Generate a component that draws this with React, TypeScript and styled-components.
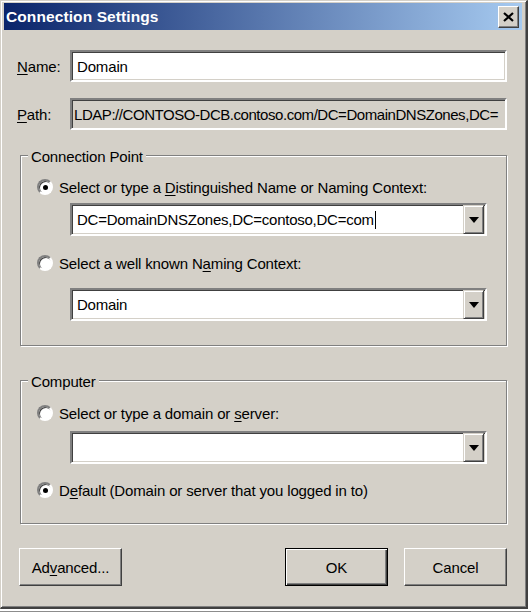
import React from "react";
import styled, { createGlobalStyle } from "styled-components";

const GlobalStyle = createGlobalStyle`
  html, body { margin: 0; padding: 0; background: #ffffff; }
  body { font-family: "Liberation Sans", Arial, sans-serif; }
  u { text-decoration: underline; text-underline-offset: 2px; text-decoration-thickness: 1px; }
`;

const Window = styled.div`
  box-sizing: border-box;
  width: 528px;
  height: 609px;
  background: #d4d0c8;
  border-style: solid;
  border-width: 1px 2px 2px 1px;
  border-color: #d4d0c8 #404040 #404040 #d4d0c8;
  box-shadow: inset 1px 1px 0 #ffffff, inset -1px -1px 0 #808080;
  padding: 2px 4px 0 3px;
  display: flex;
  flex-direction: column;
`;

const BottomEdge = styled.div`
  width: 531px;
  height: 1px;
  margin-top: 2px;
  background: #8c8c8c;
`;

const TitleBar = styled.div`
  height: 27px;
  display: flex;
  align-items: center;
  justify-content: space-between;
  padding: 0 3px 0 2px;
  background: linear-gradient(to right, #0a246a, #a6caf0);
`;

const TitleText = styled.span`
  color: #ffffff;
  font-weight: bold;
  font-size: 15.5px;
  letter-spacing: 0.1px;
`;

const CloseButton = styled.button`
  box-sizing: border-box;
  width: 21px;
  height: 22px;
  padding: 0;
  margin: 0;
  background: #d4d0c8;
  border: 1px solid;
  border-color: #ffffff #404040 #404040 #ffffff;
  box-shadow: inset -1px -1px 0 #808080;
  display: flex;
  align-items: center;
  justify-content: center;
`;

const Body = styled.div`
  display: flex;
  flex-direction: column;
  padding: 20px 15px 0 13px;
  font-size: 15px;
  letter-spacing: -0.15px;
  color: #000000;
`;

const FieldRow = styled.div`
  display: flex;
  align-items: center;
  height: 32px;
  & + & { margin-top: 16px; }
`;

const FieldLabel = styled.span`
  width: 53px;
  flex: none;
`;

const TextBox = styled.div<{ $readOnly?: boolean }>`
  box-sizing: border-box;
  flex: 1;
  min-width: 0;
  height: 32px;
  display: flex;
  align-items: center;
  padding-left: ${(p) => (p.$readOnly ? 2 : 5)}px;
  letter-spacing: ${(p) => (p.$readOnly ? "-0.45px" : "-0.15px")};
  background: ${(p) => (p.$readOnly ? "#d4d0c8" : "#ffffff")};
  border: 2px solid;
  border-color: #808080 #ffffff #ffffff #808080;
  box-shadow: inset 1px 1px 0 #404040, inset -1px -1px 0 #d4d0c8;
  white-space: nowrap;
  overflow: hidden;
`;

const Group = styled.div<{ $top: number; $bottom: number }>`
  display: flex;
  flex-direction: column;
  margin: ${(p) => p.$top}px 0 0 3px;
  border: 1px solid #808080;
  box-shadow: inset 1px 1px 0 #ffffff, 1px 1px 0 #ffffff;
  padding: 0 19px ${(p) => p.$bottom}px 16px;
`;

const Legend = styled.span`
  align-self: flex-start;
  height: 18px;
  line-height: 18px;
  margin: -8px 0 0 -9px;
  padding: 0 3px;
  background: #d4d0c8;
`;

const RadioRow = styled.div<{ $gap: number }>`
  display: flex;
  align-items: center;
  height: 20px;
  gap: 6px;
  margin-top: ${(p) => p.$gap}px;
  white-space: nowrap;
`;

const RadioCircle = styled.span<{ $checked: boolean }>`
  box-sizing: border-box;
  flex: none;
  width: 16px;
  height: 16px;
  border-radius: 50%;
  background: #ffffff;
  border: 2px solid;
  border-color: #808080 #ffffff #ffffff #808080;
  box-shadow: inset 1px 1px 0 #404040;
  display: flex;
  align-items: center;
  justify-content: center;
  &::after {
    content: "";
    width: 5px;
    height: 5px;
    border-radius: 50%;
    background: #000000;
    display: ${(p) => (p.$checked ? "block" : "none")};
  }
`;

const Combo = styled.div<{ $gap: number }>`
  box-sizing: border-box;
  height: 33px;
  margin: ${(p) => p.$gap}px 0 0 33px;
  display: flex;
  align-items: stretch;
  background: #ffffff;
  border: 2px solid;
  border-color: #808080 #ffffff #ffffff #808080;
  box-shadow: inset 1px 1px 0 #404040, inset -1px -1px 0 #d4d0c8;
`;

const ComboText = styled.div`
  flex: 1;
  min-width: 0;
  display: flex;
  align-items: center;
  padding-left: 5px;
  letter-spacing: -0.25px;
  white-space: nowrap;
  overflow: hidden;
`;

const Caret = styled.span`
  width: 1px;
  height: 18px;
  margin-left: 1px;
  background: #000000;
`;

const DropButton = styled.span`
  box-sizing: border-box;
  width: 21px;
  margin-right: 1px;
  background: #d4d0c8;
  border: 1px solid;
  border-color: #d4d0c8 #404040 #404040 #d4d0c8;
  box-shadow: inset 1px 1px 0 #ffffff, inset -1px -1px 0 #808080;
  display: flex;
  align-items: center;
  justify-content: center;
  &::after {
    content: "";
    border-style: solid;
    border-width: 6px 5px 0 5px;
    border-color: #000000 transparent transparent transparent;
  }
`;

const ButtonRow = styled.div`
  display: flex;
  align-items: center;
  margin-top: 24px;
  padding-left: 2px;
  gap: 16px;
`;

const PushButton = styled.button<{ $default?: boolean; $push?: boolean }>`
  box-sizing: border-box;
  width: 103px;
  height: 38px;
  margin: 0 0 0 ${(p) => (p.$push ? "auto" : "0")};
  padding: 0;
  font-family: "Liberation Sans", Arial, sans-serif;
  font-size: 15px;
  letter-spacing: -0.15px;
  color: #000000;
  background: #d4d0c8;
  border: 1px solid;
  border-color: ${(p) => (p.$default ? "#000000" : "#ffffff #404040 #404040 #ffffff")};
  box-shadow: ${(p) =>
    p.$default
      ? "inset 1px 1px 0 #ffffff, inset -1px -1px 0 #404040, inset -2px -2px 0 #808080"
      : "inset -1px -1px 0 #808080"};
`;

function Radio({ checked, gap, children }: { checked: boolean; gap: number; children: React.ReactNode }) {
  return (
    <RadioRow $gap={gap}>
      <RadioCircle $checked={checked} />
      <span>{children}</span>
    </RadioRow>
  );
}

function ComboBox({ gap, children }: { gap: number; children?: React.ReactNode }) {
  return (
    <Combo $gap={gap}>
      <ComboText>{children}</ComboText>
      <DropButton />
    </Combo>
  );
}

export default function App() {
  return (
    <>
      <GlobalStyle />
      <Window>
        <TitleBar>
          <TitleText>Connection Settings</TitleText>
          <CloseButton aria-label="Close">
            <svg width="11" height="10" viewBox="0 0 11 10">
              <path d="M1 1 L10 9 M10 1 L1 9" stroke="#000" strokeWidth="2.2" fill="none" />
            </svg>
          </CloseButton>
        </TitleBar>
        <Body>
          <FieldRow>
            <FieldLabel>
              <u>N</u>ame:
            </FieldLabel>
            <TextBox>Domain</TextBox>
          </FieldRow>
          <FieldRow>
            <FieldLabel>
              <u>P</u>ath:
            </FieldLabel>
            <TextBox $readOnly>LDAP://CONTOSO-DCB.contoso.com/DC=DomainDNSZones,DC=</TextBox>
          </FieldRow>

          <Group $top={25} $bottom={24}>
            <Legend>Connection Point</Legend>
            <Radio checked gap={11}>
              Select or type a <u>D</u>istinguished Name or Naming Context:
            </Radio>
            <ComboBox gap={6}>
              DC=DomainDNSZones,DC=contoso,DC=com
              <Caret />
            </ComboBox>
            <Radio checked={false} gap={17}>
              Select a well known N<u>a</u>ming Context:
            </Radio>
            <ComboBox gap={15}>Domain</ComboBox>
          </Group>

          <Group $top={34} $bottom={23}>
            <Legend>Computer</Legend>
            <Radio checked={false} gap={12}>
              Select or type a domain or <u>s</u>erver:
            </Radio>
            <ComboBox gap={8} />
            <Radio checked gap={16}>
              D<u>e</u>fault (Domain or server that you logged in to)
            </Radio>
          </Group>

          <ButtonRow>
            <PushButton>
              Ad<u>v</u>anced...
            </PushButton>
            <PushButton $default $push>
              OK
            </PushButton>
            <PushButton>Cancel</PushButton>
          </ButtonRow>
        </Body>
      </Window>
      <BottomEdge />
    </>
  );
}
